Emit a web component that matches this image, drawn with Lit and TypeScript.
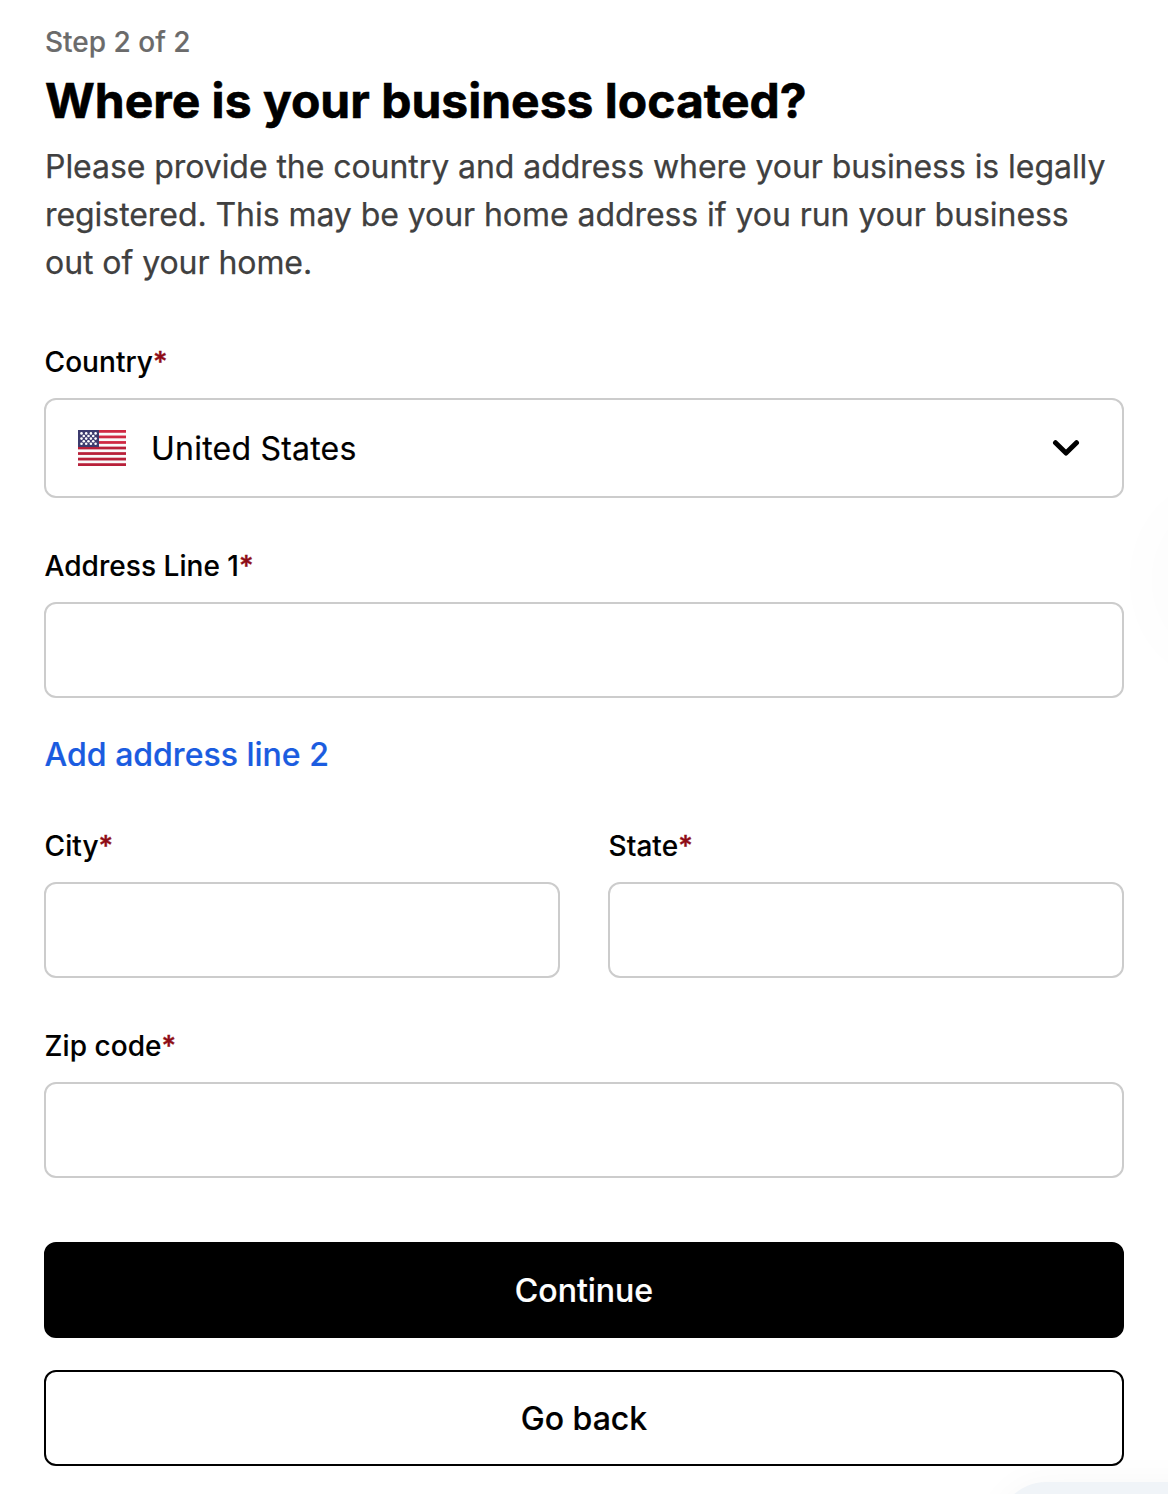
import { LitElement, html, css, svg } from "lit";
import { customElement, property } from "lit/decorators.js";

const STRIPES = [0, 2, 4, 6, 8, 10, 12];
const STAR_ROWS = [
  { y: 3.4, xs: [3.5, 8.2, 12.9, 17.6] },
  { y: 6, xs: [5.8, 10.5, 15.2] },
  { y: 8.6, xs: [3.5, 8.2, 12.9, 17.6] },
  { y: 11.2, xs: [5.8, 10.5, 15.2] },
  { y: 13.8, xs: [3.5, 8.2, 12.9, 17.6] },
];

@customElement("form-field")
export class FormField extends LitElement {
  static styles = css`
    :host { display: block; min-width: 0; }
    .label { display: block; padding-left: 0.6px; font-size: 28px; line-height: 40px; font-weight: 500; letter-spacing: 0.04px; color: #000; -webkit-text-stroke: 0.12px; }
    .required { color: #8e0b15; -webkit-text-stroke: 0.4px; }
    .control { margin-top: 16px; }
    .input {
      display: block; box-sizing: border-box; width: 100%; height: 96px; padding: 0 30px;
      border: 2px solid #ccc; border-radius: 12px; background: #fff; font: inherit; font-size: 32px; outline: none;
    }
  `;
  @property() label = "";
  render() {
    return html`
      <label class="label" for="input">${this.label}<span class="required">*</span></label>
      <div class="control"><slot><input class="input" id="input" type="text" /></slot></div>
    `;
  }
}

@customElement("app-root")
export class AppRoot extends LitElement {
  static styles = css`
    :host {
      display: block; position: relative; box-sizing: border-box; height: 1494px; overflow: hidden;
      padding: 22px 44px 0; background: #fff; color: #000; font-family: Inter, sans-serif;
    }
    .form { display: flex; flex-direction: column; position: relative; z-index: 1; }
    .step { padding-left: 1px; font-size: 28px; line-height: 40px; font-weight: 500; color: #6b6b6b; -webkit-text-stroke: 0.15px; }
    .title { margin: 10px 0 0; padding-left: 1px; font-size: 48px; line-height: 58px; font-weight: 700; white-space: nowrap; -webkit-text-stroke: 0.6px; }
    .intro { margin: 13px 0 55px; padding-left: 1px; font-size: 32px; line-height: 48px; letter-spacing: -0.06px; color: #404040; -webkit-text-stroke: 0.25px; }
    .select {
      display: flex; align-items: center; box-sizing: border-box; height: 100px; padding: 0 42px 0 32px;
      border: 2px solid #ccc; border-radius: 12px; background: #fff;
    }
    .flag { display: block; width: 48px; height: 36px; }
    .country { flex: 1; margin-left: 25px; padding-top: 2px; font-size: 32px; line-height: 48px; letter-spacing: 0.22px; -webkit-text-stroke: 0.2px; }
    .chevron { display: block; width: 28px; height: 18px; }
    .address { margin-top: 48px; }
    .link { align-self: flex-start; margin: 33px 0 47px; padding-left: 0.6px; font-size: 32px; line-height: 48px; font-weight: 500; color: #1b5ce0; text-decoration: none; -webkit-text-stroke: 0.2px; }
    .row { display: grid; grid-template-columns: 1fr 1fr; gap: 48px; margin-bottom: 48px; }
    .button {
      display: block; box-sizing: border-box; width: 100%; height: 96px; padding: 0; border: 2px solid #000;
      border-radius: 12px; background: #fff; color: #000; font: inherit; font-size: 32px; font-weight: 500;
      -webkit-text-stroke: 0.2px;
    }
    .primary { background: #000; color: #fff; }
    .actions { display: grid; gap: 32px; margin-top: 64px; }
    .bubble {
      position: absolute; left: 998px; top: 1482px; width: 240px; height: 120px; border-radius: 48px;
      background: #f0f4f8; box-shadow: 0 0 36px rgba(0, 0, 0, 0.035);
    }
    .glow {
      position: absolute; left: 1184px; top: 530px; width: 100px; height: 100px; border-radius: 50%;
      box-shadow: 0 0 100px rgba(0, 0, 0, 0.055);
    }
  `;

  private flag() {
    return html`<svg class="flag" viewBox="0 0 48 36" aria-hidden="true">
      <rect width="48" height="36" fill="#fafafa" />
      ${STRIPES.map((n) => svg`<rect y=${(n * 36) / 13} width="48" height=${36 / 13} fill=${n < 5 ? "#cf2842" : "#b82039"} />`)}
      <rect width="21" height="17" fill="#3c3b6e" />
      ${STAR_ROWS.map((r) => r.xs.map((x) => svg`<circle cx=${x} cy=${r.y} r="1.3" fill="#fff" />`))}
    </svg>`;
  }

  render() {
    return html`
      <div class="glow"></div>
      <div class="bubble"></div>
      <div class="form">
        <div class="step">Step 2 of 2</div>
        <h1 class="title">Where is your business located?</h1>
        <p class="intro">Please provide the country and address where your business is legally registered. This may be your home address if you run your business out of your home.</p>
        <form-field label="Country">
          <div class="select">
            ${this.flag()}
            <span class="country">United States</span>
            <svg class="chevron" viewBox="0 0 28 18" fill="none" aria-hidden="true">
              <path d="M3.5 3.7 14 14l10.5-10.3" stroke="#000" stroke-width="5" stroke-linecap="round" stroke-linejoin="round" />
            </svg>
          </div>
        </form-field>
        <form-field class="address" label="Address Line 1"></form-field>
        <a class="link">Add address line 2</a>
        <div class="row">
          <form-field label="City"></form-field>
          <form-field label="State"></form-field>
        </div>
        <form-field label="Zip code"></form-field>
        <div class="actions">
          <button class="button primary">Continue</button>
          <button class="button">Go back</button>
        </div>
      </div>
    `;
  }
}
